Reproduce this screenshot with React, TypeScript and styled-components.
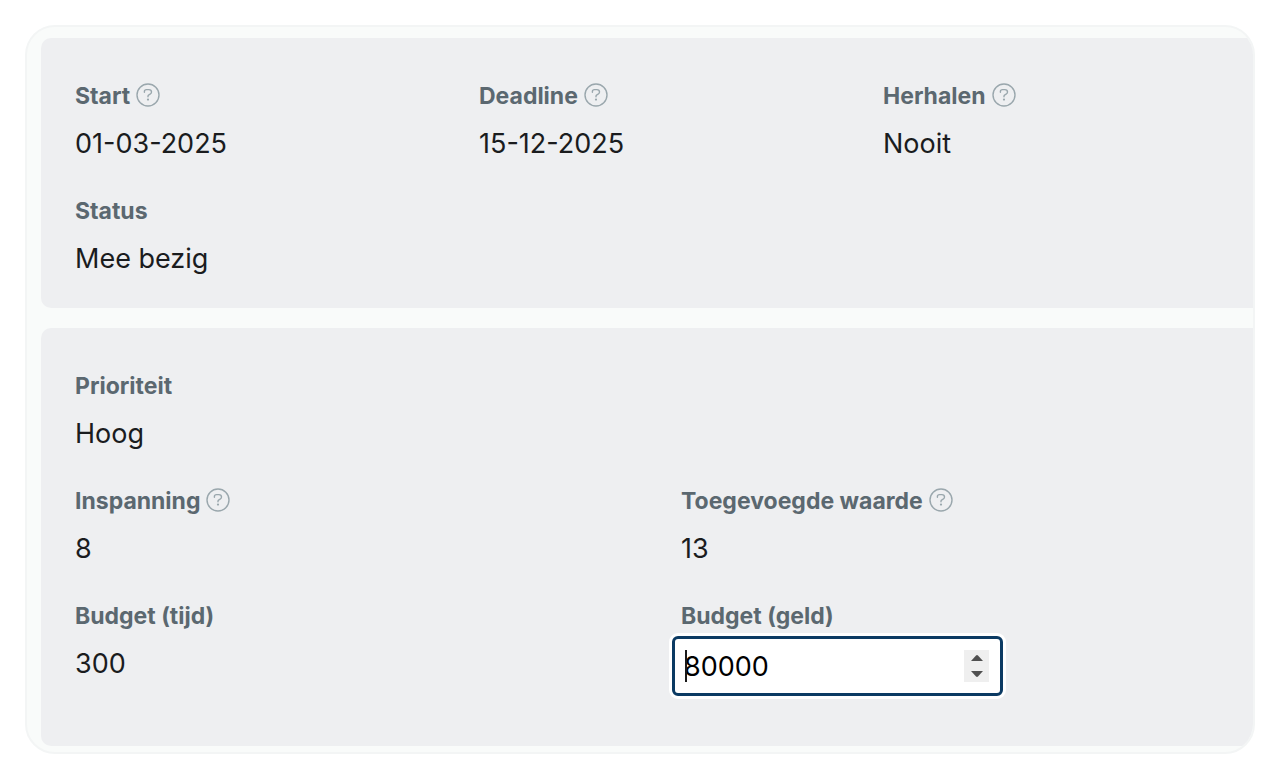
import React, { useState } from "react";
import styled, { createGlobalStyle } from "styled-components";

const GlobalStyle = createGlobalStyle`
  *, *::before, *::after { box-sizing: border-box; }
  body {
    margin: 0;
    background: #ffffff;
    color: #1a1c1e;
    font-family: Inter, "Liberation Sans", sans-serif;
    font-size: 27px;
    line-height: 48px;
  }
`;

const Page = styled.main`
  padding: 25px;
`;

const Frame = styled.div`
  display: flex;
  flex-direction: column;
  gap: 20px;
  padding: 11px 0 6px 14px;
  overflow: hidden;
  border: 2px solid #f3f5f5;
  border-radius: 30px;
  background: #f9fbfa;
`;

const Panel = styled.section<{ $bottom: number }>`
  display: flex;
  flex-direction: column;
  gap: 19px;
  margin-right: -68px;
  padding: 34px 34px ${(p) => p.$bottom}px;
  border-radius: 10px;
  background: #eeeff1;
`;

const Row = styled.div<{ $columns: number }>`
  display: grid;
  grid-template-columns: repeat(${(p) => p.$columns}, minmax(0, 1fr));
`;

const FieldBox = styled.div`
  display: flex;
  flex-direction: column;
  align-items: flex-start;
`;

const LabelLine = styled.div`
  display: flex;
  align-items: center;
  gap: 6px;
  height: 48px;
  color: #5b6870;
  font-size: 23px;
  font-weight: 700;
  white-space: nowrap;
`;

const HelpButton = styled.button`
  display: block;
  width: 24px;
  height: 24px;
  margin-bottom: 2px;
  padding: 0;
  border: 0;
  background: none;
  color: #9aa7ad;
  cursor: help;

  svg { display: block; }
`;

const Value = styled.div`
  white-space: nowrap;
`;

const NumberBox = styled.div`
  position: relative;
  display: flex;
  align-items: center;
  justify-content: space-between;
  width: 331px;
  height: 60px;
  margin: -4px 0 0 -9px;
  padding: 0 11px 0 9px;
  border: 3px solid #0b3a63;
  border-radius: 6px;
  background: #ffffff;
  box-shadow: 0 0 0 3px #ffffff;
`;

const NumberInput = styled.input`
  flex: 1;
  min-width: 0;
  height: 48px;
  padding: 2px 0 0;
  border: 0;
  outline: 0;
  background: transparent;
  color: #000000;
  font: inherit;
  caret-color: transparent;
  appearance: textfield;

  &::-webkit-inner-spin-button,
  &::-webkit-outer-spin-button {
    margin: 0;
    appearance: none;
  }
`;

const Caret = styled.span`
  position: absolute;
  top: 11px;
  left: 10px;
  width: 2px;
  height: 32px;
  background: #1a1a1a;
`;

const Spinner = styled.div`
  display: flex;
  flex-direction: column;
  width: 25px;
  height: 32px;
  background: #efefef;
`;

const SpinButton = styled.button`
  display: flex;
  flex: 1;
  align-items: center;
  justify-content: center;
  padding: 0;
  border: 0;
  background: none;
  color: #505050;
`;

function Help({ topic }: { topic: string }) {
  return (
    <HelpButton type="button" aria-label={`Uitleg over ${topic}`}>
      <svg width="24" height="24" viewBox="0 0 24 24" fill="none" stroke="currentColor" aria-hidden="true">
        <circle cx="12" cy="12" r="11" strokeWidth="1.4" />
        <path
          d="M8.4 9.2V8.6C8.4 7.4 9.3 6.6 10.5 6.6h2.4c1.5 0 2.6 1 2.6 2.4 0 1-.5 1.7-1.4 2.2l-1.3.8c-.6.3-.8.7-.8 1.3v.5"
          strokeWidth="1.4"
          strokeLinecap="round"
          strokeLinejoin="round"
        />
        <circle cx="12" cy="16.6" r="1.1" fill="currentColor" stroke="none" />
      </svg>
    </HelpButton>
  );
}

type FieldProps = { label: string; value: string; help?: boolean };

function Field({ label, value, help }: FieldProps) {
  return (
    <FieldBox>
      <LabelLine>
        <span>{label}</span>
        {help && <Help topic={label} />}
      </LabelLine>
      <Value>{value}</Value>
    </FieldBox>
  );
}

function MoneyField() {
  const [amount, setAmount] = useState(80000);
  return (
    <FieldBox>
      <LabelLine>
        <label htmlFor="budget-geld">Budget (geld)</label>
      </LabelLine>
      <NumberBox>
        <NumberInput
          id="budget-geld"
          type="number"
          value={amount}
          onChange={(e) => setAmount(Number(e.target.value))}
        />
        <Caret />
        <Spinner>
          <SpinButton type="button" aria-label="Verhogen" onClick={() => setAmount(amount + 1)}>
            <svg width="12" height="6" viewBox="0 0 12 6" aria-hidden="true">
              <path d="M0 6L5 .4q1-.8 2 0L12 6z" fill="currentColor" />
            </svg>
          </SpinButton>
          <SpinButton type="button" aria-label="Verlagen" onClick={() => setAmount(amount - 1)}>
            <svg width="12" height="6" viewBox="0 0 12 6" aria-hidden="true">
              <path d="M0 0L5 5.6q1 .8 2 0L12 0z" fill="currentColor" />
            </svg>
          </SpinButton>
        </Spinner>
      </NumberBox>
    </FieldBox>
  );
}

export default function App() {
  return (
    <Page>
      <GlobalStyle />
      <Frame>
        <Panel $bottom={25}>
          <Row $columns={3}>
            <Field label="Start" value="01-03-2025" help />
            <Field label="Deadline" value="15-12-2025" help />
            <Field label="Herhalen" value="Nooit" help />
          </Row>
          <Row $columns={1}>
            <Field label="Status" value="Mee bezig" />
          </Row>
        </Panel>
        <Panel $bottom={50}>
          <Row $columns={1}>
            <Field label="Prioriteit" value="Hoog" />
          </Row>
          <Row $columns={2}>
            <Field label="Inspanning" value="8" help />
            <Field label="Toegevoegde waarde" value="13" help />
          </Row>
          <Row $columns={2}>
            <Field label="Budget (tijd)" value="300" />
            <MoneyField />
          </Row>
        </Panel>
      </Frame>
    </Page>
  );
}
